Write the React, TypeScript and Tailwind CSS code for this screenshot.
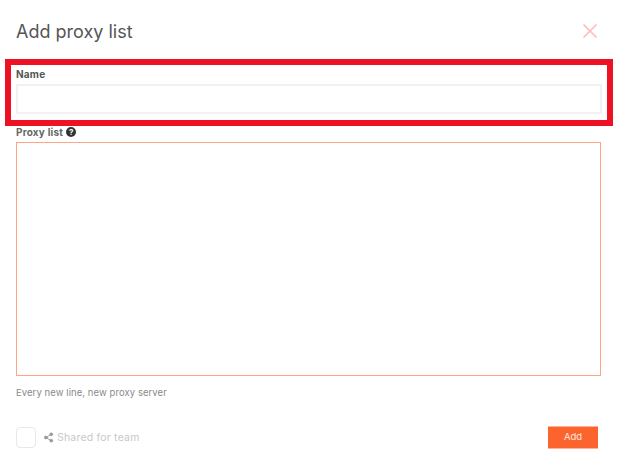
import { Share2, X } from "lucide-react";

const App = () => {
  return (
    <div className="flex h-[470px] w-[618px] flex-col overflow-hidden bg-white px-4 font-['Inter',sans-serif]">
      <div className="flex h-[59px] items-start justify-between pt-5">
        <h2 className="text-[18px] leading-6 font-normal text-[#555]">Add proxy list</h2>
        <X className="-mt-[1px] mr-0 h-[24px] w-[24px] text-[#fdbcbc]" strokeWidth={1.75} />
      </div>

      {/* highlighted field */}
      <div className="-mx-[11px] flex h-[67px] flex-col border-[6px] border-[#ed1123] px-[5px]">
        <label className="mt-[3px] h-4 text-[10px] leading-[12px] font-bold tracking-[0.2px] text-[#555]">Name</label>
        <input className="h-[30px] w-full border-2 border-[#f1f1f1] bg-white outline-none" />
      </div>

      <label className="-mt-[2px] mb-[2px] flex h-4 items-center gap-[3px] text-[10px] font-bold tracking-[0.2px] text-[#666]">
        Proxy list
        <span className="flex h-[10px] w-[10px] items-center justify-center rounded-full bg-[#333] text-[8px] leading-none font-bold tracking-normal text-white">
          ?
        </span>
      </label>
      <textarea className="h-[234px] w-[585px] resize-none border border-[#ffa488] bg-white outline-none" />

      <p className="mt-[10px] text-[9.5px] leading-[14px] tracking-[0.07px] text-[#8a8a8a]">Every new line, new proxy server</p>

      <div className="mt-[26px] flex items-center justify-between pr-[4px]">
        <div className="flex items-center">
          <div className="h-[21px] w-[20px] rounded-sm border border-[#e8e8e8] bg-white" />
          <Share2 className="ml-[7px] h-[11px] w-[11px] fill-[#999] text-[#999]" />
          <span className="ml-[3px] text-[10.5px] tracking-[0.2px] text-[#c8c8c8]">Shared for team</span>
        </div>
        <button className="h-[23px] w-[50px] border-y border-[#ffb199] bg-[#fb642d] text-[9.5px] font-normal text-[#ffe9e0]">
          Add
        </button>
      </div>
    </div>
  );
};

export default App;
